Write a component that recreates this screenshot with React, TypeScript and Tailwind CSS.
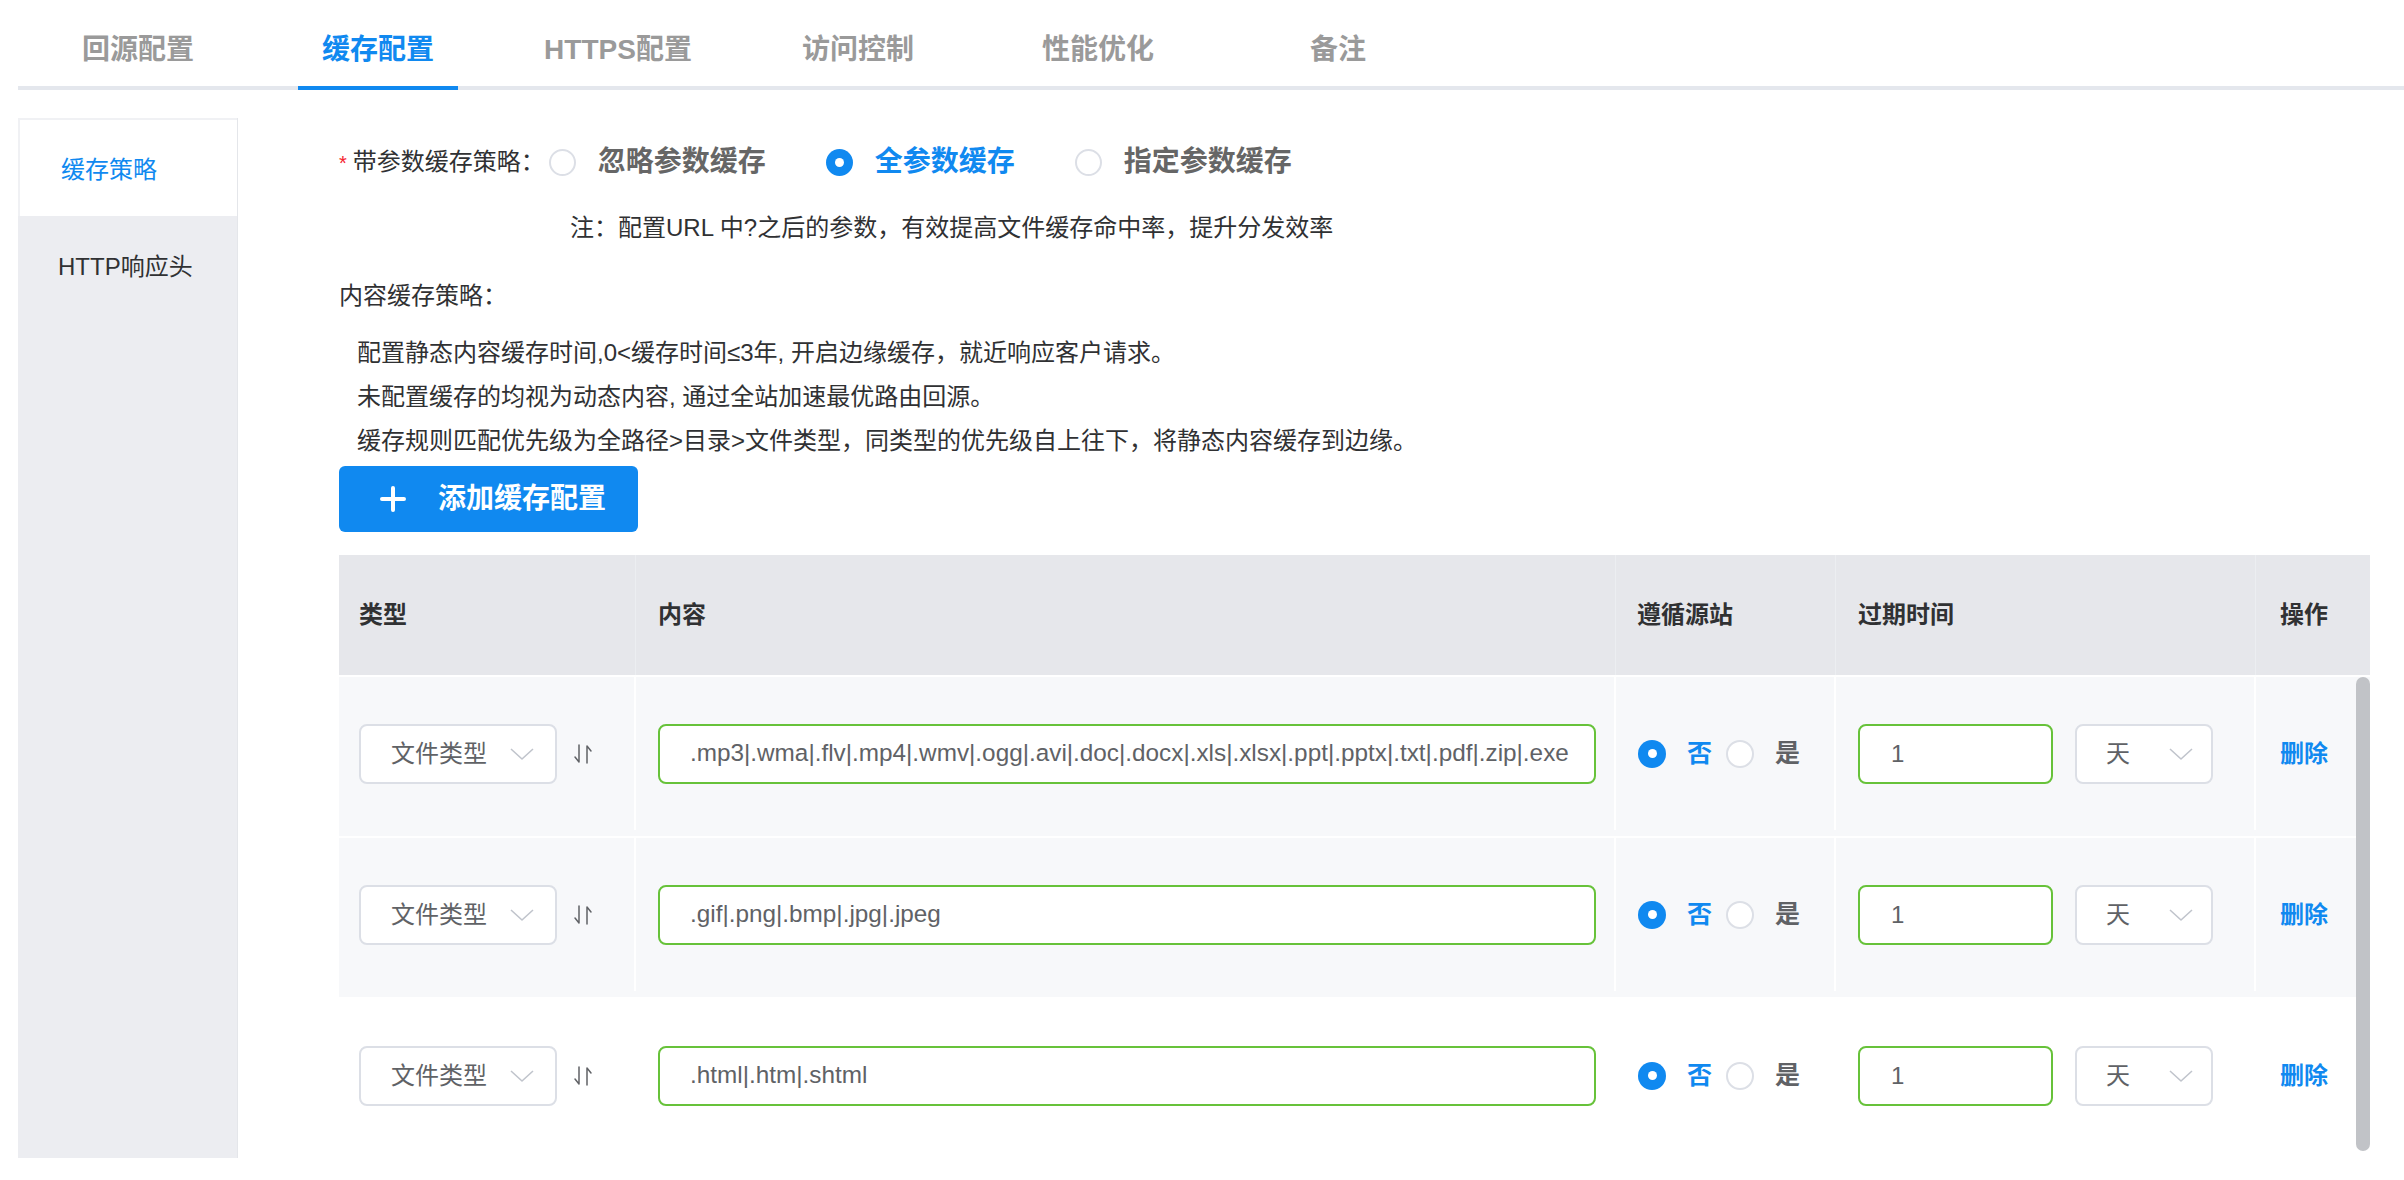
import React from "react";

// 缓存配置页面
const tabs = ["回源配置", "缓存配置", "HTTPS配置", "访问控制", "性能优化", "备注"];

const rules = [
  {
    content:
      ".mp3|.wma|.flv|.mp4|.wmv|.ogg|.avi|.doc|.docx|.xls|.xlsx|.ppt|.pptx|.txt|.pdf|.zip|.exe",
    shaded: true,
  },
  { content: ".gif|.png|.bmp|.jpg|.jpeg", shaded: true },
  { content: ".html|.htm|.shtml", shaded: false },
];

const tips = [
  "配置静态内容缓存时间,0<缓存时间≤3年, 开启边缘缓存，就近响应客户请求。",
  "未配置缓存的均视为动态内容, 通过全站加速最优路由回源。",
  "缓存规则匹配优先级为全路径>目录>文件类型，同类型的优先级自上往下，将静态内容缓存到边缘。",
];

function Chevron() {
  return (
    <svg width="26" height="14" viewBox="0 0 26 14" fill="none">
      <polyline
        points="2,2 13,12 24,2"
        stroke="#c0c4cc"
        strokeWidth="1.6"
        strokeLinejoin="round"
      />
    </svg>
  );
}

function SortIcon() {
  return (
    <svg width="22" height="22" viewBox="0 0 22 22" fill="none">
      <path
        d="M7 2 V19 L3 14 M15 20 V3 L19 8"
        stroke="#606266"
        strokeWidth="1.5"
        strokeLinecap="round"
        strokeLinejoin="round"
      />
    </svg>
  );
}

function Radio({ checked, size = 28 }: { checked: boolean; size?: number }) {
  if (checked) {
    return (
      <span
        className="flex items-center justify-center rounded-full bg-[#1089f0] shrink-0"
        style={{ width: size, height: size }}
      >
        <span className="w-[9px] h-[9px] rounded-full bg-white" />
      </span>
    );
  }
  return (
    <span
      className="rounded-full border-2 border-[#dcdfe6] bg-white shrink-0"
      style={{ width: size, height: size }}
    />
  );
}

export default function App() {
  return (
    <div className="w-[2404px] h-[1180px] overflow-hidden bg-white font-['Liberation_Sans','Noto_Sans_CJK_SC',sans-serif] text-[#303133]">
      {/* 顶部标签 */}
      <div className="ml-[18px] h-[90px] border-b-4 border-[#e4e7ed] flex pl-[40px] gap-[80px]">
        {tabs.map((t, i) => (
          <div
            key={t}
            className={
              i === 1
                ? "w-[160px] h-[90px] -mb-[4px] pt-[14px] flex items-center justify-center border-b-4 border-[#1089f0] text-[#1089f0] text-[28px] font-semibold"
                : "w-[160px] h-[90px] -mb-[4px] pt-[14px] flex items-center justify-center border-b-4 border-transparent text-[#9a9a9a] text-[28px] font-semibold"
            }
          >
            {t}
          </div>
        ))}
      </div>

      <div className="flex mt-[28px]">
        {/* 侧边栏 */}
        <div className="ml-[18px] w-[220px] h-[1040px] bg-[#ecedf1] border-r border-[#e4e6ea] flex flex-col">
          <div className="h-[98px] pt-[4px] bg-white border-t-2 border-l-2 border-[#f0f1f4] flex items-center pl-[41px] text-[24px] text-[#1089f0]">
            缓存策略
          </div>
          <div className="h-[102px] flex items-center pl-[40px] text-[24px] text-[#303133]">
            HTTP响应头
          </div>
        </div>

        {/* 主内容 */}
        <div className="ml-[101px] w-[2031px] flex flex-col">
          <div className="h-[86px] pt-[2px] flex items-center text-[24px]">
            <span className="text-[#f5222d] text-[20px] mr-[6px] self-start mt-[28px]">*</span>
            <span className="text-[#303133]">带参数缓存策略：</span>
            <div className="flex items-center ml-[4px]">
              <Radio checked={false} size={27} />
              <span className="ml-[22px] mr-[60px] text-[28px] font-semibold text-[#666]">忽略参数缓存</span>
              <Radio checked size={27} />
              <span className="ml-[22px] mr-[60px] text-[28px] font-semibold text-[#1089f0]">全参数缓存</span>
              <Radio checked={false} size={27} />
              <span className="ml-[22px] text-[28px] font-semibold text-[#666]">指定参数缓存</span>
            </div>
          </div>

          <div className="h-[48px] flex items-center pl-[231px] text-[24px] text-[#303133]">
            注：配置URL 中?之后的参数，有效提高文件缓存命中率，提升分发效率
          </div>

          <div className="mt-[20px] h-[48px] flex items-center text-[24px] text-[#303133]">
            内容缓存策略：
          </div>

          <div className="mt-[11px] pl-[18px] flex flex-col text-[24px] text-[#303133]">
            {tips.map((t) => (
              <div key={t} className="h-[44px] flex items-center">
                {t}
              </div>
            ))}
          </div>

          <button className="mt-[3px] w-[299px] h-[66px] rounded-[6px] bg-[#1089f0] flex items-center pl-[41px] text-white text-[28px] font-semibold">
            <svg width="26" height="26" viewBox="0 0 26 26" fill="none">
              <path d="M13 2 V24 M2 13 H24" stroke="white" strokeWidth="4" strokeLinecap="round" />
            </svg>
            <span className="ml-[32px]">添加缓存配置</span>
          </button>

          {/* 表格 */}
          <div className="mt-[23px] relative">
            <div className="flex h-[120px] bg-[#e6e7eb] text-[24px] font-semibold text-[#303133]">
              <div className="w-[297px] pl-[20px] flex items-center border-r border-[#eceef1]">类型</div>
              <div className="w-[980px] pl-[22px] flex items-center border-r border-[#eceef1]">内容</div>
              <div className="w-[220px] pl-[21px] flex items-center border-r border-[#eceef1]">遵循源站</div>
              <div className="w-[420px] pl-[22px] flex items-center border-r border-[#eceef1]">过期时间</div>
              <div className="w-[114px] pl-[24px] flex items-center">操作</div>
            </div>

            {rules.map((r, i) => (
              <div
                key={i}
                className={
                  r.shaded
                    ? "flex h-[161px] pb-[6px] bg-[#f7f8fa] border-t-2 border-white"
                    : "flex h-[161px] pb-[6px] bg-white border-t-2 border-white"
                }
              >
                <div className="w-[297px] pl-[20px] flex items-center border-r-2 border-white">
                  <div className="w-[198px] h-[60px] bg-white border-2 border-[#dcdfe6] rounded-[8px] flex items-center pl-[30px] text-[24px] text-[#606266]">
                    <span>文件类型</span>
                    <span className="ml-[22px] flex">
                      <Chevron />
                    </span>
                  </div>
                  <span className="ml-[15px] flex">
                    <SortIcon />
                  </span>
                </div>
                <div className="w-[980px] pl-[22px] flex items-center border-r-2 border-white">
                  <div className="w-[938px] h-[60px] bg-white border-2 border-[#67c23a] rounded-[8px] flex items-center pl-[30px] text-[24.3px] text-[#606266] whitespace-nowrap overflow-hidden">
                    {r.content}
                  </div>
                </div>
                <div className="w-[220px] pl-[22px] flex items-center border-r-2 border-white">
                  <Radio checked />
                  <span className="ml-[21px] text-[25px] font-semibold text-[#1089f0]">否</span>
                  <span className="ml-[14px] flex">
                    <Radio checked={false} />
                  </span>
                  <span className="ml-[21px] text-[25px] font-semibold text-[#606266]">是</span>
                </div>
                <div className="w-[420px] pl-[22px] flex items-center border-r-2 border-white">
                  <div className="w-[195px] h-[60px] bg-white border-2 border-[#67c23a] rounded-[8px] flex items-center pl-[31px] text-[24px] text-[#606266]">
                    1
                  </div>
                  <div className="ml-[22px] w-[138px] h-[60px] bg-white border-2 border-[#dcdfe6] rounded-[8px] flex items-center pl-[29px] text-[24px] text-[#606266]">
                    <span>天</span>
                    <span className="ml-[38px] flex">
                      <Chevron />
                    </span>
                  </div>
                </div>
                <div className="w-[114px] pl-[24px] flex items-center text-[24px] font-semibold text-[#1089f0]">
                  删除
                </div>
              </div>
            ))}

            {/* 滚动条 */}
            <div className="absolute right-0 top-[122px] w-[14px] h-[474px] rounded-full bg-[#c1c3c7]" />
          </div>
        </div>
      </div>
    </div>
  );
}
